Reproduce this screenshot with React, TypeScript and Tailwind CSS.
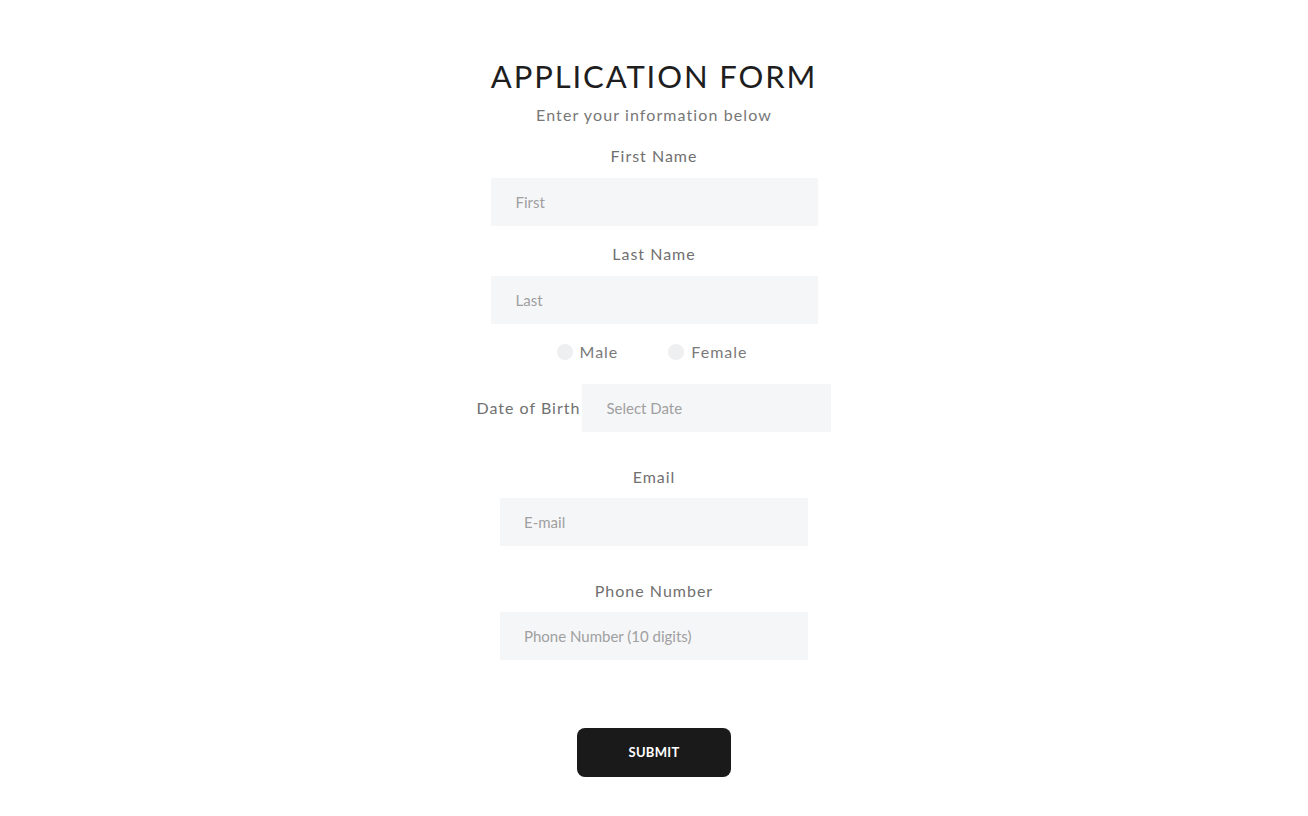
import React, { useState } from "react";

const font = { fontFamily: "Lato, 'Open Sans', sans-serif" };

const App = () => {
  const [gender, setGender] = useState("");

  return (
    <div
      className="w-screen min-h-screen bg-white flex flex-col items-center pt-[56px] pb-10"
      style={font}
    >
      <h1 className="text-[31px] leading-[40px] tracking-[1.9px] text-[#1e1e1e] font-normal">
        APPLICATION FORM
      </h1>
      <p className="mt-[7px] text-[16px] leading-[24px] tracking-[1.1px] text-[#777]">
        Enter your information below
      </p>

      <label className="mt-[17px] text-[16px] leading-[24px] tracking-[1px] text-[#707070]">
        First Name
      </label>
      <input
        placeholder="First"
        className="mt-[10px] w-[327px] h-[48px] bg-[#f5f6f8] px-[25px] text-[15px] text-[#555] placeholder:text-[#a0a0a0] outline-none"
      />

      <label className="mt-[16px] text-[16px] leading-[24px] tracking-[1px] text-[#707070]">
        Last Name
      </label>
      <input
        placeholder="Last"
        className="mt-[10px] w-[327px] h-[48px] bg-[#f5f6f8] px-[25px] text-[15px] text-[#555] placeholder:text-[#a0a0a0] outline-none"
      />

      <div className="mt-[16px] h-[24px] flex items-center text-[16px] tracking-[1px] text-[#7a7a7a] -translate-x-[2px]">
        <label className="flex items-center gap-[7px] mr-[50px]" onClick={() => setGender("m")}>
          <span
            className={
              gender === "m"
                ? "w-[16px] h-[16px] rounded-full bg-[#1a1a1a]"
                : "w-[16px] h-[16px] rounded-full bg-[#eeeff1]"
            }
          ></span>
          <span>Male</span>
        </label>
        <label className="flex items-center gap-[7px]" onClick={() => setGender("f")}>
          <span
            className={
              gender === "f"
                ? "w-[16px] h-[16px] rounded-full bg-[#1a1a1a]"
                : "w-[16px] h-[16px] rounded-full bg-[#eeeff1]"
            }
          ></span>
          <span>Female</span>
        </label>
      </div>

      <div className="mt-[20px] flex items-center">
        <label className="text-[16px] tracking-[1px] text-[#707070] mr-[2px]">
          Date of Birth
        </label>
        <input
          placeholder="Select Date"
          className="w-[249px] h-[48px] bg-[#f5f6f8] px-[24px] text-[15px] text-[#555] placeholder:text-[#a0a0a0] outline-none"
        />
      </div>

      <label className="mt-[33px] text-[16px] leading-[24px] tracking-[1px] text-[#707070]">
        Email
      </label>
      <input
        placeholder="E-mail"
        className="mt-[9px] w-[308px] h-[48px] bg-[#f5f6f8] px-[24px] text-[15px] text-[#555] placeholder:text-[#a0a0a0] outline-none"
      />

      <label className="mt-[33px] text-[16px] leading-[24px] tracking-[1px] text-[#707070]">
        Phone Number
      </label>
      <input
        placeholder="Phone Number (10 digits)"
        className="mt-[9px] w-[308px] h-[48px] bg-[#f5f6f8] px-[24px] text-[15px] text-[#555] placeholder:text-[#a0a0a0] outline-none"
      />

      <button className="mt-[68px] w-[154px] h-[49px] rounded-[8px] bg-[#1a1a1a] text-white text-[13px] font-bold tracking-[0.3px]">
        SUBMIT
      </button>
    </div>
  );
};

export default App;
